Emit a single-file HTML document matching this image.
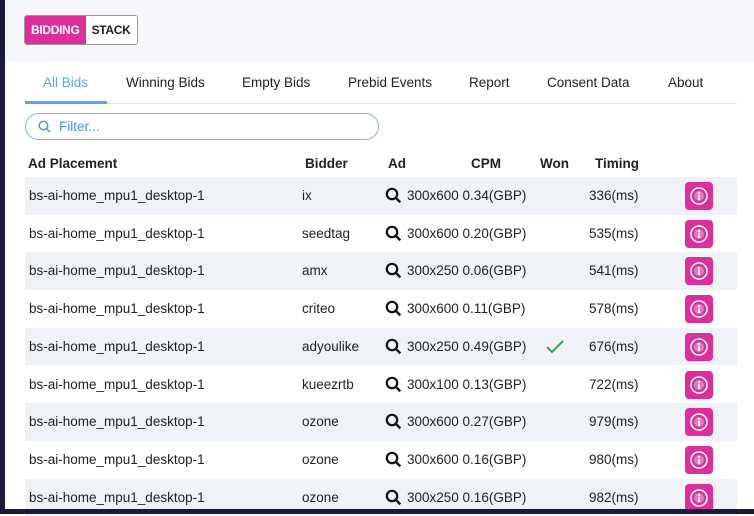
<!DOCTYPE html><html><head><style>
body{margin:0;width:754px;height:514px;overflow:hidden;background:#fff;font-family:"Liberation Sans",sans-serif;position:relative}
.l{position:absolute;left:0;top:0;width:5px;height:514px;background:#1c1a3c}
.b{position:absolute;left:0;top:509px;width:754px;height:5px;background:#1c1a3c}
.hd{position:absolute;left:5px;top:0;right:0;height:62px;background:#f6f7fa}
.logo{position:absolute;left:24px;top:15px;height:28px;border:1px solid #999;border-radius:3px;display:flex;font-weight:bold;font-size:12px;overflow:hidden;letter-spacing:-0.3px}
.logo span{display:flex;align-items:center;padding:0 6px}
.tabs{position:absolute;left:25px;top:62px;width:712px;height:41px;border-bottom:1px solid #e3e5e8;font-size:13.5px;color:#222}
.tabs span{position:absolute;top:13px}
.ul{position:absolute;left:25px;top:101px;width:82px;height:3px;background:#5aa5f5}
.f{position:absolute;left:25px;top:113px;width:352px;height:25px;border:1.5px solid #7fb3f0;border-radius:14px;color:#4a90e8;font-size:13.5px}
.r{position:absolute;left:25px;width:712px;height:37.7px}
.r.s{background:#eff2f7}
.r div{position:absolute;top:11px;font-size:13.5px;color:#222;white-space:nowrap}
.h div{position:absolute;top:156px;font-weight:bold;font-size:13.5px;color:#222}
.btn{position:absolute;left:660px;top:5px!important;width:28px;height:28px;background:#dc2f9c;border-radius:4px}
</style></head><body>
<div class="hd"></div>
<div class="logo"><span style="background:#dc2f9c;color:#fff">BIDDING</span><span style="background:#fff;color:#222">STACK</span></div>
<div class="tabs"><span style="left:18px;color:#5aa5f5">All Bids</span><span style="left:101px">Winning Bids</span><span style="left:217px">Empty Bids</span><span style="left:323px">Prebid Events</span><span style="left:444px">Report</span><span style="left:522px">Consent Data</span><span style="left:643px">About</span></div>
<div class="ul"></div>
<div class="f"><svg style="position:absolute;left:12px;top:6px" width="13" height="13"><circle cx="5.5" cy="5.5" r="4.3" fill="none" stroke="#4a90e8" stroke-width="1.4"/><path d="M9 9l3 3" stroke="#4a90e8" stroke-width="1.5"/></svg><span style="position:absolute;left:33px;top:5px">Filter...</span></div>
<div class="h"><div style="left:28px">Ad Placement</div><div style="left:305px">Bidder</div><div style="left:388px">Ad</div><div style="left:471px">CPM</div><div style="left:540px">Won</div><div style="left:595px">Timing</div></div>
<div id="rows"></div>
<script>
var d=[["ix","300x600 0.34(GBP)","336"],["seedtag","300x600 0.20(GBP)","535"],["amx","300x250 0.06(GBP)","541"],["criteo","300x600 0.11(GBP)","578"],["adyoulike","300x250 0.49(GBP)","676",1],["kueezrtb","300x100 0.13(GBP)","722"],["ozone","300x600 0.27(GBP)","979"],["ozone","300x600 0.16(GBP)","980"],["ozone","300x250 0.16(GBP)","982"]];
var h="";d.forEach(function(x,i){h+='<div class="r'+(i%2==0?' s':'')+'" style="top:'+(177+i*37.7)+'px"><div style="left:4px">bs-ai-home_mpu1_desktop-1</div><div style="left:277px">'+x[0]+'</div><svg style="position:absolute;left:360px;top:10px" width="17" height="17"><circle cx="7" cy="7" r="5.2" fill="none" stroke="#111" stroke-width="2.2"/><path d="M10.8 10.8l4.5 4.5" stroke="#111" stroke-width="2.4"/></svg><div style="left:382px">'+x[1]+'</div>'+(x[3]?'<svg style="position:absolute;left:521px;top:12px" width="18" height="14"><path d="M1 7l5 5L17 1" fill="none" stroke="#2e9a4a" stroke-width="1.8"/></svg>':'')+'<div style="left:564px">'+x[2]+'(ms)</div><div class="btn"><svg width="28" height="28"><circle cx="14" cy="14" r="8" fill="none" stroke="#fff" stroke-width="1.6"/><circle cx="14" cy="14" r="5" fill="#fff" opacity=".35"/><circle cx="14" cy="11" r="1.2" fill="#fff"/><rect x="13" y="13" width="2" height="5" fill="#fff"/></svg></div></div>'});
document.getElementById("rows").innerHTML=h;
</script>
<div class="l"></div><div class="b"></div>
</body></html>
